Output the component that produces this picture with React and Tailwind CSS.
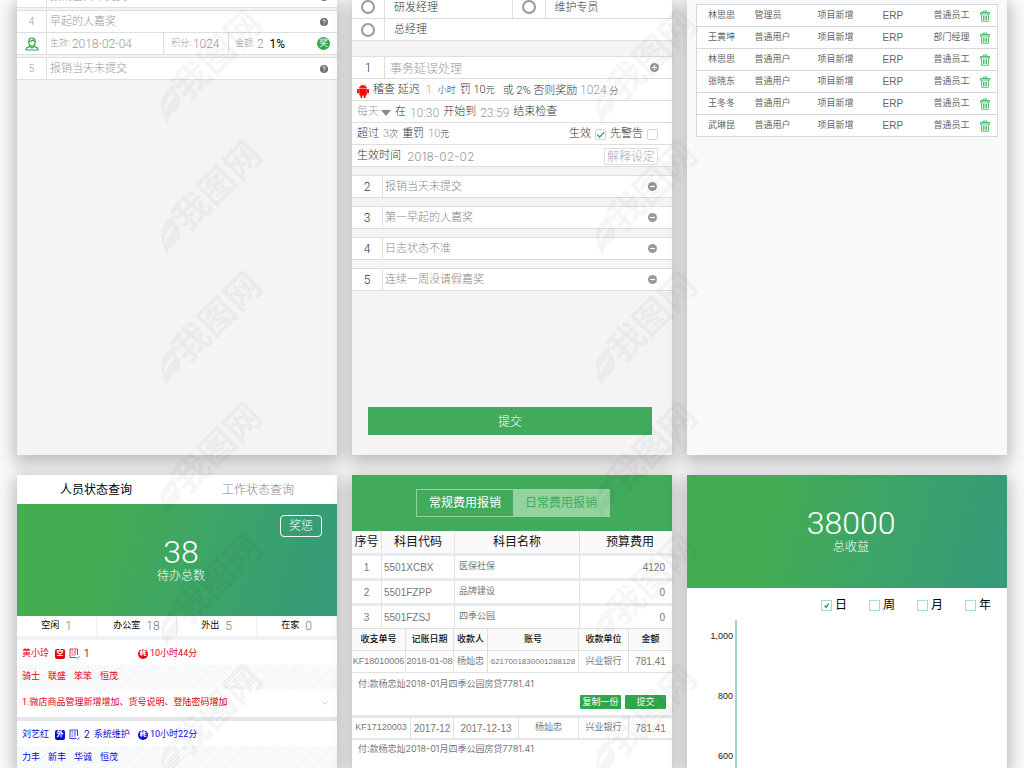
import { useState } from "react";

const auditRows = [
  ["林思思", "管理员", "项目新增", "ERP", "普通员工"],
  ["王黄坤", "普通用户", "项目新增", "ERP", "部门经理"],
  ["林思思", "普通用户", "项目新增", "ERP", "普通员工"],
  ["张晓东", "普通用户", "项目新增", "ERP", "普通员工"],
  ["王冬冬", "普通用户", "项目新增", "ERP", "普通员工"],
  ["武琳昆", "普通用户", "项目新增", "ERP", "普通员工"],
];

const rules = [
  { id: 2, name: "报销当天未提交" },
  { id: 3, name: "第一早起的人嘉奖" },
  { id: 4, name: "日志状态不准" },
  { id: 5, name: "连续一周没请假嘉奖" },
];

const subjects = [
  ["1", "5501XCBX", "医保社保", "4120"],
  ["2", "5501FZPP", "品牌建设", "0"],
  ["3", "5501FZSJ", "四季公园", "0"],
];

const stats = [
  ["空闲", 1],
  ["办公室", 18],
  ["外出", 5],
  ["在家", 0],
];

function Panel({ className, children }) {
  return (
    <section className={`min-w-0 overflow-hidden shadow-[0_5px_16px_3px_rgba(0,0,0,0.26)] ${className}`}>
      {children}
    </section>
  );
}

/* ---------- icons ---------- */

function HelpIcon() {
  return (
    <svg viewBox="0 0 16 16" className="size-2">
      <circle cx="8" cy="8" r="8" fill="#707070" />
      <path d="M5.5 6.2a2.5 2.5 0 1 1 3.6 2.2c-.8.4-1.1.8-1.1 1.5M8 11.4v1.6" fill="none" stroke="#fff" strokeWidth="1.8" />
    </svg>
  );
}

function ToggleIcon({ plus }) {
  return (
    <svg viewBox="0 0 16 16" className="size-[9px]">
      <circle cx="8" cy="8" r="8" fill="#999" />
      <path d={plus ? "M3.5 8h9M8 3.5v9" : "M3.5 8h9"} stroke="#fff" strokeWidth="2" />
    </svg>
  );
}

function PersonIcon() {
  return (
    <svg viewBox="0 0 28 28" className="size-[14px]" fill="none" stroke="#2fa64c" strokeWidth="2.4">
      <path d="M14 2c-4.500 0-6.500 3-6.500 7.500S10 18 14 18s6.500-4 6.500-8.500S18.500 2 14 2z" />
      <path d="M8 9c4 0 6-1 8-3 1 2 2.500 3 4.500 3M10 17l-1 2-6 3c-1 1-1 2-1 4h24c0-2 0-3-1-4l-6-3-1-2M10 19l4 3 4-3" />
    </svg>
  );
}

function AndroidIcon() {
  return (
    <svg viewBox="0 0 24 28" className="h-[14px] w-3" fill="#f00">
      <path d="M4 9c.3-3.600 3.200-6.500 8-6.500S19.700 5.400 20 9zM4.500 10h15v11a2 2 0 0 1-2 2H17v3.500a1.700 1.700 0 0 1-3.500 0V23h-3v3.500a1.700 1.700 0 0 1-3.500 0V23h-.5a2 2 0 0 1-2-2z" />
      <rect x="0" y="9.500" width="3.800" height="9.500" rx="1.900" />
      <rect x="20.200" y="9.500" width="3.800" height="9.500" rx="1.900" />
      <path d="M7 .5l2 3M17 .5l-2 3" stroke="#f00" />
      <circle cx="8.500" cy="6" r=".9" fill="#fff" />
      <circle cx="15.500" cy="6" r=".9" fill="#fff" />
    </svg>
  );
}

function TrashIcon() {
  return (
    <svg viewBox="0 0 20 24" className="h-3 w-[10px]" fill="none" stroke="#3fb45c" strokeWidth="1.800">
      <path d="M1 5h18v3H1zM6.500 5V2h7v3M2.500 8l1 14.500h13l1-14.500M7 11v9M10 11v9M13 11v9" />
    </svg>
  );
}

function ReportIcon() {
  return (
    <svg viewBox="0 0 22 22" className="size-[11px]" fill="none" stroke="currentColor" strokeWidth="1.600">
      <path d="M14 19H2V2h15v12M5 6h3M10 6h4M5 10h2M9 10h5M5 14h3M10 14h3" />
      <path d="M15 19l2 2 4-4" />
    </svg>
  );
}

function Badge({ round, children }) {
  return (
    <span
      className={`flex size-[10px] items-center justify-center bg-current ${round ? "rounded-full" : "rounded-xs"}`}
    >
      <span className="text-[7px] leading-none font-bold text-white">{children}</span>
    </span>
  );
}

function Watermark() {
  return (
    <svg className="pointer-events-none absolute inset-0 h-full w-full" aria-hidden="true">
      <defs>
        <pattern id="mark" x="160" y="9" width="435" height="131" patternUnits="userSpaceOnUse">
          <g fill="#000" fillOpacity="0.035">
            <path d="M8 116C-2 98-2 86 16 74c-4 8 4 10 4 20 0 7-5 8-9 12-3 3-3 6-3 10zM5 104c1-9 9-11 9-20-7 6-11 11-9 20z" />
            <text
              transform="translate(28 93) rotate(-45)"
              fontSize="36"
              fontWeight="700"
              fontFamily="Noto Sans CJK SC, sans-serif"
            >
              我图网
            </text>
          </g>
        </pattern>
      </defs>
      <rect width="100%" height="100%" fill="url(#mark)" />
    </svg>
  );
}

/* ---------- top row ---------- */

function RewardRow({ id, name }) {
  return (
    <div className="flex h-[23px] items-center border-y border-[#dedede] bg-white text-[#999]">
      <span className="w-[29px] text-center text-[10px]">{id}</span>
      <span className="flex h-full flex-1 items-center border-l border-[#dedede] pt-0.5 pl-[3px] text-[11px]">
        {name}
      </span>
      <button type="button" aria-label="说明" className="mr-[9px]">
        <HelpIcon />
      </button>
    </div>
  );
}

function RewardPanel() {
  return (
    <Panel className="bg-[#f4f4f4]">
      <div className="-mt-[15px] flex flex-col gap-0.5">
        <RewardRow id={3} name="报销当天未提交" />
        <div>
          <RewardRow id={4} name="早起的人嘉奖" />
          <div className="flex h-[22px] items-center border-b border-[#dedede] bg-white text-[9px] text-[#999]">
            <span className="flex w-[29px] justify-center">
              <PersonIcon />
            </span>
            <span className="flex h-full w-[117px] items-center border-l border-[#dedede] pl-[3px]">
              生效: <span className="pl-0.5 text-xs">2018-02-04</span>
            </span>
            <span className="flex h-full w-[65px] items-center border-l border-[#dedede] pl-[7px]">
              积分: <span className="pl-0.5 text-xs">1024</span>
            </span>
            <span className="flex h-full flex-1 items-center border-l border-[#dedede] pl-[6px]">
              金额: <span className="pl-0.5 text-xs">2</span>
              <span className="pl-1.5 text-xs font-normal text-black">1%</span>
            </span>
            <span className="mr-[7px] flex size-[13px] items-center justify-center rounded-full bg-[#2fa64c] font-normal text-white">
              奖
            </span>
          </div>
        </div>
        <RewardRow id={5} name="报销当天未提交" />
      </div>
    </Panel>
  );
}

function RoleOption({ id, label }) {
  return (
    <div className="flex h-full flex-1 items-center">
      <span className="flex w-8 justify-center">
        <input
          id={id}
          type="radio"
          name="role"
          className="size-[14px] appearance-none rounded-full border-2 border-[#999] bg-white checked:bg-[#42aa5b]"
        />
      </span>
      <label htmlFor={id} className="flex h-full items-center border-l border-[#dedede] pt-0.5 pl-[9px]">
        {label}
      </label>
    </div>
  );
}

function Tick({ children, ...props }) {
  return (
    <label className="flex items-center gap-1">
      {children}
      <span className="relative flex">
        <input
          type="checkbox"
          className="peer size-[11px] appearance-none rounded-xs border border-[#d4d4d4] bg-white"
          {...props}
        />
        <svg
          viewBox="0 0 12 12"
          className="pointer-events-none absolute inset-0 hidden h-full w-full peer-checked:block"
          fill="none"
          stroke="#2fa64c"
          strokeWidth="1.3"
        >
          <path d="M2.500 6l2.500 3 5-5.500" />
        </svg>
      </span>
    </label>
  );
}

function RulePanel() {
  const line = "flex h-[22px] items-center border-b border-[#dedede] bg-white pt-0.5 pr-[14px] pl-[5px]";

  return (
    <Panel className="flex flex-col bg-[#f4f4f4] text-[11px] text-[#333]">
      <div className="-mt-1">
        <div className="flex h-[23px] items-center border-b border-[#dedede] bg-white">
          <RoleOption id="role-dev" label="研发经理" />
          <div className="flex h-full flex-1 border-l border-[#dedede]">
            <RoleOption id="role-ops" label="维护专员" />
          </div>
        </div>
        <div className="flex h-[22px] items-center border-b border-[#dedede] bg-white">
          <RoleOption id="role-ceo" label="总经理" />
        </div>
      </div>

      {/* expanded rule */}
      <div className="mt-[15px] border-t border-[#dedede]">
        <div className="flex h-[22px] items-center border-b border-[#dedede] bg-white">
          <span className="w-[32px] text-center text-xs">1</span>
          <span className="flex h-full flex-1 items-center border-l border-[#dedede] pt-0.5 pl-[5px] text-xs text-[#999]">
            事务延误处理
          </span>
          <button type="button" aria-label="收起" className="mr-[13px]">
            <ToggleIcon plus />
          </button>
        </div>
        <div className={`${line} gap-1`}>
          <AndroidIcon />
          <span>稽查 延迟</span>
          <span className="px-0.5 text-[#999]">1</span>
          <span className="text-[9px]">小时</span>
          <span>
            罚 10<span className="text-[9px]">元</span>
          </span>
          <span className="pl-1">
            或 2% 否则奖励 <span className="text-xs text-[#999]">1024</span> <span className="text-[9px]">分</span>
          </span>
        </div>
        <div className={`${line} gap-1`}>
          <span className="relative flex items-center text-[#999]">
            <select aria-label="周期" className="appearance-none pr-3">
              <option>每天</option>
              <option>每周</option>
            </select>
            <svg viewBox="0 0 10 6" className="pointer-events-none absolute right-0 h-[6px] w-[10px]" fill="#888">
              <path d="M0 0h10L5 6z" />
            </svg>
          </span>
          <span>在</span>
          <span className="text-xs leading-3 text-[#999]">10:30</span>
          <span>开始到</span>
          <span className="text-xs leading-3 text-[#999]">23:59</span>
          <span>结束检查</span>
        </div>
        <div className={`${line} gap-1`}>
          <span>超过</span>
          <span>
            <span className="text-[#999]">3</span>
            <span className="text-[9px]">次</span>
          </span>
          <span>重罚</span>
          <span className="flex-1">
            <span className="text-[#999]">10</span>
            <span className="text-[9px]">元</span>
          </span>
          <Tick defaultChecked>生效</Tick>
          <Tick>先警告</Tick>
        </div>
        <div className={line}>
          <span>生效时间</span>
          <span className="flex-1 pl-[6px] font-['Inter'] text-xs text-[#999]">2018-02-02</span>
          <button type="button" className="h-[17px] border border-[#dedede] px-[2px] text-xs leading-none text-[#aaa]">
            解释设定
          </button>
        </div>
      </div>

      <div className="mt-2 flex flex-col gap-2">
        {rules.map((rule) => (
          <div key={rule.id} className="flex h-[23px] items-center border-y border-[#dedede] bg-white">
            <span className="w-[30px] text-center text-xs">{rule.id}</span>
            <span className="flex h-full flex-1 items-center border-l border-[#dedede] pt-0.5 pl-0.5 text-[#888]">
              {rule.name}
            </span>
            <button type="button" aria-label="展开" className="mr-[15px]">
              <ToggleIcon />
            </button>
          </div>
        ))}
      </div>

      <button type="button" className="mt-auto mr-5 mb-5 ml-4 h-7 bg-[#42aa5b] pt-0.5 text-xs text-white">
        提交
      </button>
    </Panel>
  );
}

function AuditPanel() {
  return (
    <Panel className="bg-[#f8f9fb] px-[9px] pt-1">
      <table className="w-full table-fixed border-collapse bg-white font-['Liberation_Sans','Noto_Sans_CJK_SC',sans-serif] text-[9px] font-normal text-[#666]">
        <tbody>
          {auditRows.map((row, i) => (
            <tr key={i} className="h-[22px] border border-[#d8d8d8]">
              <td className="w-[58px] pl-[11px]">{row[0]}</td>
              <td className="w-[63px]">{row[1]}</td>
              <td className="w-[65px]">{row[2]}</td>
              <td className="w-[51px] text-[10px]">{row[3]}</td>
              <td>{row[4]}</td>
              <td className="w-[18px]">
                <button type="button" aria-label="删除" className="block">
                  <TrashIcon />
                </button>
              </td>
            </tr>
          ))}
        </tbody>
      </table>
    </Panel>
  );
}

/* ---------- bottom row ---------- */

function Person({ color, name, state, count, note, time, clients }) {
  return (
    <div className={`text-[9px] ${color}`}>
      <div className="flex h-[25px] items-center bg-white pt-0.5 pl-[5px]">
        <span className="flex w-[116px] items-center gap-1">
          <span className="pr-0.5">{name}</span>
          <Badge>{state}</Badge>
          <ReportIcon />
          <span className="text-[10px]">{count}</span>
          <span>{note}</span>
        </span>
        <span className="flex items-center gap-0.5">
          <Badge round>耗</Badge>
          {time}
        </span>
      </div>
      <div className="flex h-6 items-center gap-2 bg-[repeating-linear-gradient(135deg,#fbfcfc_0_2px,#f1f4f5_2px_3px)] pl-[5px]">
        {clients.map((c) => (
          <span key={c}>{c}</span>
        ))}
      </div>
    </div>
  );
}

function StatusPanel() {
  const [tab, setTab] = useState(0);

  return (
    <Panel className="bg-white font-normal">
      <div className="flex h-[29px] text-xs">
        {["人员状态查询", "工作状态查询"].map((t, i) => (
          <button
            key={t}
            type="button"
            onClick={() => setTab(i)}
            className={`flex-1 ${tab === i ? "pr-1 text-black" : "font-light text-[#888]"}`}
          >
            {t}
          </button>
        ))}
      </div>
      <div className="relative flex h-[112px] flex-col items-center bg-linear-105 from-[#44ad52] from-25% to-[#349a7a] pt-[32px] pl-2 font-light text-white">
        <button
          type="button"
          className="absolute top-[11px] right-[15px] h-[22px] w-[42px] rounded-sm border border-white text-xs leading-none"
        >
          奖惩
        </button>
        <span className="text-[32px] leading-8">38</span>
        <span className="text-xs leading-4">待办总数</span>
      </div>
      <div className="flex h-5 text-[9px] text-black">
        {stats.map(([label, n]) => (
          <span key={label} className="flex flex-1 items-center justify-center gap-1.5 border-r border-[#edf0f3]">
            {label}
            <span className="text-xs font-light text-[#777]">{n}</span>
          </span>
        ))}
      </div>

      <div className="border-t-4 border-[#f0f2f4]">
        <Person
          color="text-[#e00012]"
          name="黄小玲"
          state="空"
          count={1}
          time="10小时44分"
          clients={["骑士", "联盛", "笨笨", "恒茂"]}
        />
        <div className="flex h-7 items-center justify-between pr-[9px] pl-[5px] text-[9px] text-[#e00012]">
          1.微店商品管理新增增加、货号说明、登陆密码增加
          <svg viewBox="0 0 8 5" className="h-1 w-[6px]" fill="none" stroke="#bbb">
            <path d="M.5.5L4 4 7.500.5" />
          </svg>
        </div>
      </div>
      <div className="border-t-4 border-[#e4e7ea]">
        <Person
          color="text-[#0a0ae0]"
          name="刘艺红"
          state="外"
          count={2}
          note="系统维护"
          time="10小时22分"
          clients={["力丰", "新丰", "华诚", "恒茂"]}
        />
      </div>
    </Panel>
  );
}

function ExpensePanel() {
  const [tab, setTab] = useState(0);
  const cell = "border-r border-[#e0e0e0] last:border-r-0";

  return (
    <Panel className="bg-white font-['Liberation_Sans','Noto_Sans_CJK_SC',sans-serif] font-normal text-[#777]">
      <div className="flex h-14 items-center justify-center bg-[#42aa5b] pl-0.5">
        <div className="flex h-7 border border-[#93d3a2] text-xs">
          {["常规费用报销", "日常费用报销"].map((t, i) => (
            <button
              key={t}
              type="button"
              onClick={() => setTab(i)}
              className={`w-24 ${tab === i ? "text-white" : "bg-[#93d3a2] text-[#42aa5b]"}`}
            >
              {t}
            </button>
          ))}
        </div>
      </div>

      <table className="w-full table-fixed border-separate border-spacing-0 text-[9px]">
        <thead>
          <tr className="h-[22px] bg-[#fafafa] text-xs text-[#111]">
            <th className={`${cell} w-[30px] font-normal`}>序号</th>
            <th className={`${cell} w-[73px] font-normal`}>科目代码</th>
            <th className={`${cell} w-[125px] font-normal`}>科目名称</th>
            <th className="pl-2 font-normal">预算费用</th>
          </tr>
        </thead>
        <tbody>
          {subjects.map((s) => (
            <tr key={s[0]} className="h-[25px]">
              <td className={`${cell} border-t-3 border-t-[#e9ecee] text-center text-[10px]`}>{s[0]}</td>
              <td className={`${cell} border-t-3 border-t-[#e9ecee] pl-0.5 text-[10px]`}>{s[1]}</td>
              <td className={`${cell} border-t-3 border-t-[#e9ecee] pl-1`}>{s[2]}</td>
              <td className="border-t-3 border-t-[#e9ecee] pr-[7px] text-right text-[10px]">{s[3]}</td>
            </tr>
          ))}
        </tbody>
      </table>

      <table className="w-full table-fixed border-separate border-spacing-0 border-y border-[#e0e0e0] text-center text-[9px] whitespace-nowrap">
        <thead>
          <tr className="h-[21px] bg-[#fafafa] text-[#111]">
            <th className={`${cell} w-[54px] font-medium`}>收支单号</th>
            <th className={`${cell} w-[48px] font-medium`}>记账日期</th>
            <th className={`${cell} w-[34px] font-medium`}>收款人</th>
            <th className={`${cell} font-medium`}>账号</th>
            <th className={`${cell} w-[50px] font-medium`}>收款单位</th>
            <th className={`${cell} w-[43px] font-medium`}>金额</th>
          </tr>
        </thead>
        <tbody>
          <tr className="h-[22px]">
            <td className={`${cell} border-t`}>KF18010006</td>
            <td className={`${cell} border-t`}>2018-01-08</td>
            <td className={`${cell} border-t`}>杨灿忠</td>
            <td className={`${cell} border-t text-[8px]`}>6217001830001288128</td>
            <td className={`${cell} border-t`}>兴业银行</td>
            <td className={`${cell} border-t border-[#e0e0e0] text-[10px]`}>781.41</td>
          </tr>
        </tbody>
      </table>
      <p className="h-[22px] pl-1.5 font-['Inter','Noto_Sans_CJK_SC'] text-[9px] leading-[22px]">
        付:款杨忠灿2018-01月四季公园房贷7781.41
      </p>
      <div className="flex h-5 justify-end gap-1 pr-1.5 text-[9px] leading-none text-white">
        <button type="button" className="h-[14px] w-[41px] rounded-[1px] bg-[#2fa64c]">
          复制一份
        </button>
        <button type="button" className="h-[14px] w-[41px] rounded-[1px] bg-[#2fa64c]">
          提交
        </button>
      </div>

      <table className="w-full table-fixed border-separate border-spacing-0 border-t-3 border-b-2 border-[#e6e6e6] text-center text-[9px] whitespace-nowrap">
        <tbody>
          <tr className="h-5">
            <td className={`${cell} w-[59px]`}>KF17120003</td>
            <td className={`${cell} w-[43px] text-[10px]`}>2017-12</td>
            <td className={`${cell} w-[65px] text-[10px]`}>2017-12-13</td>
            <td className={cell}>杨灿忠</td>
            <td className={`${cell} w-[50px]`}>兴业银行</td>
            <td className={`${cell} w-[43px] text-[10px]`}>781.41</td>
          </tr>
        </tbody>
      </table>
      <p className="pl-1.5 font-['Inter','Noto_Sans_CJK_SC'] text-[9px] leading-[18px]">
        付:款杨忠灿2018-01月四季公园房贷7781.41
      </p>
    </Panel>
  );
}

function IncomePanel() {
  return (
    <Panel className="flex flex-col bg-white">
      <div className="flex h-[113px] flex-col items-center bg-linear-105 from-[#44ad52] from-25% to-[#349a7a] pt-[32px] pl-2 text-white">
        <span className="text-[32px] leading-8">38000</span>
        <span className="text-xs leading-4">总收益</span>
      </div>
      <div className="flex h-8 items-center justify-end gap-[22px] pt-0.5 pr-4 text-xs font-normal text-black">
        {["日", "周", "月", "年"].map((u, i) => (
          <label key={u} className="flex items-center gap-[3px]">
            <span className="relative flex">
              <input
                type="checkbox"
                defaultChecked={i === 0}
                className="peer size-[11px] appearance-none border border-[#a5dcc6] bg-white"
              />
              <svg
                viewBox="0 0 12 12"
                className="pointer-events-none absolute inset-0 hidden h-full w-full peer-checked:block"
                fill="none"
                stroke="#1a9a60"
                strokeWidth="1.500"
              >
                <path d="M4 6l1.500 2L8.500 4" />
              </svg>
            </span>
            {u}
          </label>
        ))}
      </div>
      <div className="flex flex-1 font-['Liberation_Sans',sans-serif] text-[9px] text-[#222]">
        <div className="flex w-12 flex-col gap-12 pt-2.5 pr-0.5 text-right leading-3">
          <span>1,000</span>
          <span>800</span>
          <span>600</span>
        </div>
        <div className="flex-1 border-l-2 border-[#a3d8bd]" />
      </div>
    </Panel>
  );
}

export default function App() {
  return (
    <main className="relative h-screen overflow-hidden bg-[#fafafa] font-['Roboto','Noto_Sans_CJK_SC',sans-serif] font-light">
      <div className="grid h-full grid-cols-3 grid-rows-[455fr_293fr] gap-x-[15px] gap-y-5 px-[17px]">
        <RewardPanel />
        <RulePanel />
        <AuditPanel />
        <StatusPanel />
        <ExpensePanel />
        <IncomePanel />
      </div>
      <Watermark />
    </main>
  );
}
